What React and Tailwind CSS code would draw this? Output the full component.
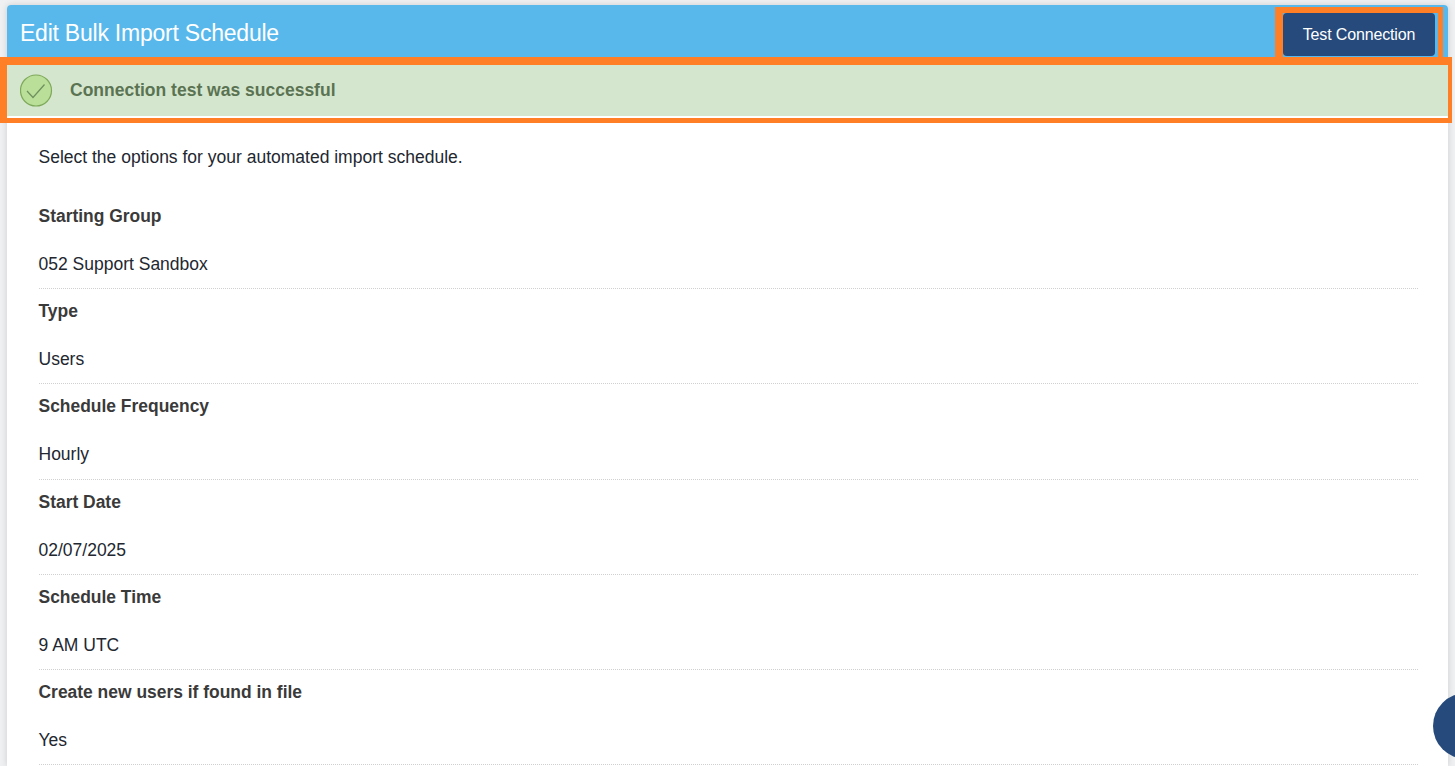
const FIELDS = [
  { label: "Starting Group", value: "052 Support Sandbox" },
  { label: "Type", value: "Users" },
  { label: "Schedule Frequency", value: "Hourly" },
  { label: "Start Date", value: "02/07/2025" },
  { label: "Schedule Time", value: "9 AM UTC" },
  { label: "Create new users if found in file", value: "Yes" },
];

function SuccessIcon() {
  return (
    <svg width="33" height="33" viewBox="0 0 33 33" className="shrink-0">
      <circle cx="16" cy="16.5" r="15.5" fill="#b9df98" stroke="#7fa95a" strokeWidth="1.2" />
      <path d="M7 17 L13 23.5 L24.5 10.5" fill="none" stroke="#6f8f5f" strokeWidth="1.2" />
    </svg>
  );
}

function Field({ label, value }) {
  return (
    <div className="h-[95.2px] border-b border-dotted border-[#d0d0d0]">
      <p className="pt-[11px] text-[17.45px] leading-[22px] font-bold text-[#3a3a3a]">{label}</p>
      <p className="pt-[26px] text-[17.5px] leading-[22px] text-[#222730]">{value}</p>
    </div>
  );
}

export default function App() {
  return (
    <div className="relative h-screen overflow-hidden bg-[#eef0f2] pt-[5px] pl-[7px] pr-[7px] font-['Liberation_Sans',Arial,sans-serif]">
      <div className="h-full rounded-t-[4px] bg-white shadow-[0_0_6px_rgba(0,0,0,0.15)]">
        <div className="flex h-[60px] items-start justify-between rounded-t-[4px] bg-[#58b8ec] pl-[13px] pr-[13px]">
          <h1 className="pt-[13px] text-[23px] leading-[30px] tracking-[-0.23px] text-white">Edit Bulk Import Schedule</h1>
          <button
            type="button"
            className="mt-[8px] h-[43px] w-[152px] rounded-[4px] bg-[#264a7b] text-[16px] tracking-[-0.15px] text-white"
          >
            Test Connection
          </button>
        </div>
        <div className="flex h-[51px] items-center gap-[17px] bg-[#d5e6ce] pl-[13px]">
          <SuccessIcon />
          <p className="text-[17.5px] font-bold text-[#5a7352]">Connection test was successful</p>
        </div>
        <div className="pl-[31.5px] pr-[30px] pt-[30px]">
          <p className="text-[17.5px] leading-[22px] text-[#222730]">Select the options for your automated import schedule.</p>
          <div className="pt-[26px]">
            {FIELDS.map((field) => (
              <Field key={field.label} label={field.label} value={field.value} />
            ))}
          </div>
        </div>
      </div>

      {/* orange annotation boxes drawn over the screenshot */}
      <div className="absolute top-[57px] left-0 h-[66px] w-[1452px] border-t-[8px] border-r-[4px] border-b-[5px] border-l-[7px] border-[#ff7f27]" />
      <div className="absolute top-[7px] left-[1275px] h-[50px] w-[168px] border-t-[6px] border-r-[5px] border-l-[8px] border-[#ff7f27]" />

      {/* floating help button */}
      <div className="absolute top-[693px] left-[1433px] size-[66px] rounded-full bg-[#264a7b]" />
    </div>
  );
}
